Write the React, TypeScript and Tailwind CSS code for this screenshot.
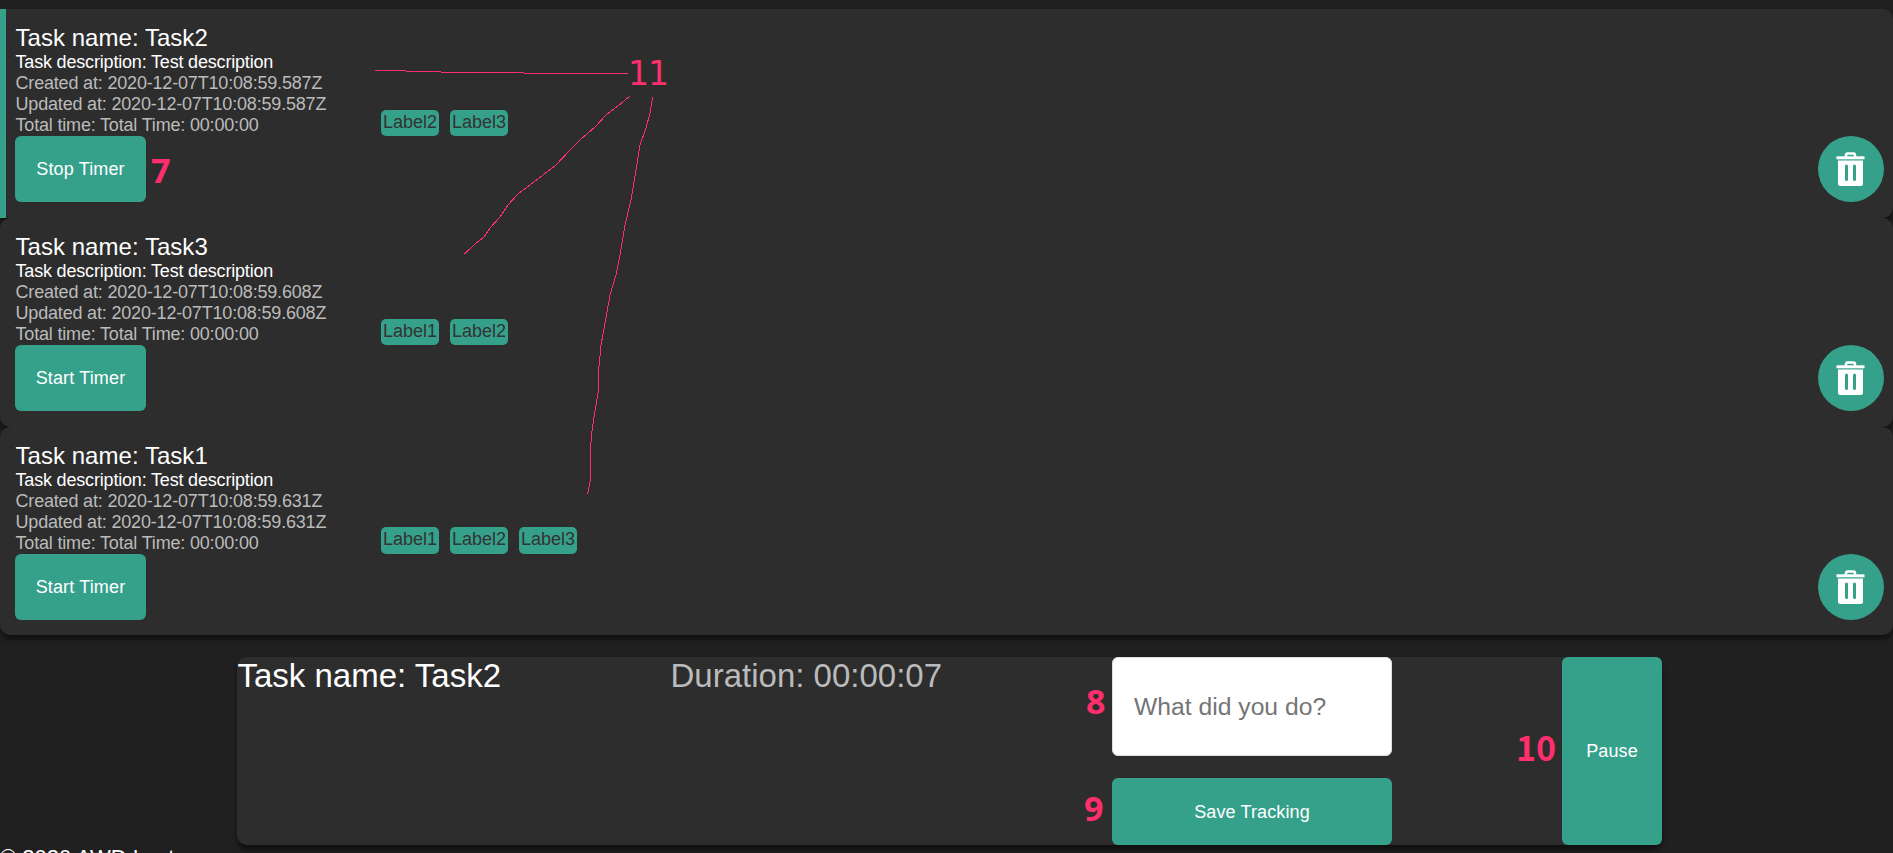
import React from 'react';

type Task = { name: string; stamp: string; labels: string[]; running?: boolean };

const tasks: Task[] = [
  { name: 'Task2', stamp: '2020-12-07T10:08:59.587Z', labels: ['Label2', 'Label3'], running: true },
  { name: 'Task3', stamp: '2020-12-07T10:08:59.608Z', labels: ['Label1', 'Label2'] },
  { name: 'Task1', stamp: '2020-12-07T10:08:59.631Z', labels: ['Label1', 'Label2', 'Label3'] },
];

function Trash() {
  return (
    <svg width="29" height="34" viewBox="0 0 29 34" fill="none" className="-translate-x-px">
      <path d="M10 5V3.200Q10 1.500 11.700 1.500H17.300Q19 1.500 19 3.200V5" stroke="#fff" strokeWidth="2.600" />
      <rect x="0.5" y="4.300" width="28" height="3" fill="#fff" />
      <path
        fillRule="evenodd"
        fill="#fff"
        d="M2 8.600H27V31.500Q27 34 24.500 34H4.500Q2 34 2 31.500ZM9 14V27.500a1.500 1.500 0 0 0 3 0V14a1.500 1.500 0 0 0 -3 0ZM17 14V27.500a1.500 1.500 0 0 0 3 0V14a1.500 1.500 0 0 0 -3 0Z"
      />
    </svg>
  );
}

function TaskCard({ task }: { task: Task }) {
  return (
    <li
      className={`group flex h-[209px] flex-col rounded-[10px] bg-[#2d2d2d] pr-[9px] pt-[15px] shadow-[0_5px_5px_rgba(0,0,0,0.45)] last:h-[208px] ${
        task.running ? 'rounded-l-none border-l-6 border-[#36a18b] pl-[9px]' : 'pl-[15px]'
      }`}
    >
      <div className="flex h-[112px] items-end">
        <div className="w-[366px] pl-[0.5px] leading-[21px] tracking-[-0.18px] text-[#bbb]">
          <h2 className="text-[24px] leading-[28px] tracking-[0.04px] text-white">Task name: {task.name}</h2>
          <p className="text-white">Task description: Test description</p>
          <p>Created at: {task.stamp}</p>
          <p>Updated at: {task.stamp}</p>
          <p>Total time: Total Time: 00:00:00</p>
        </div>
        <ul className="flex gap-[11px]">
          {task.labels.map((l) => (
            <li
              key={l}
              className="h-[26px] w-[58px] rounded-[5px] bg-[#36a18b] text-center leading-[24px] text-[#333] group-last:h-[27px]"
            >
              {l}
            </li>
          ))}
        </ul>
      </div>
      <div className="flex justify-between">
        <button className="h-[66px] w-[131px] rounded-[6px] bg-[#36a18b] tracking-[0.15px] text-white">
          {task.running ? 'Stop Timer' : 'Start Timer'}
        </button>
        <button className="flex size-[66px] items-center justify-center rounded-full bg-[#36a18b]">
          <Trash />
        </button>
      </div>
    </li>
  );
}

function Annotations() {
  return (
    <div className="pointer-events-none absolute inset-0 font-['Noto_Sans',sans-serif] text-[34px] leading-[40px] text-[#ff2e6c]">
      <svg className="absolute inset-0" width="1893" height="853" fill="none" stroke="#ff2e6c" shapeRendering="crispEdges">
        <path d="M375 70.500H406M406 71.500H441M441 72.500H524M524 73.500H628" />
        <path d="M630.500 95.500L618 106L606 115L596 126L587 134L580 140L570 150L556 165L543 175L530 185L518 194L508 205L500 217L490 228L484 237L475 244L464.500 254" />
        <path d="M652.500 97.500L650 113L646 128L640 145L636 170L631 200L625 225L620 255L616 275L610 295L606 318L601 345L598.500 372V390L596 405L593.500 420L591.500 435L590.500 450V480L587.500 494" />
      </svg>
      <span className="absolute left-[628px] top-[54px] font-['DejaVu_Sans',sans-serif] text-[33px] tracking-[-1px]">11</span>
      <b className="absolute left-[151px] top-[150px]">7</b>
      <b className="absolute left-[1086px] top-[681px]">8</b>
      <b className="absolute left-[1084px] top-[788px]">9</b>
      <b className="absolute left-[1516px] top-[727px] font-['Noto_Sans_CJK_SC',sans-serif]">10</b>
    </div>
  );
}

export default function App() {
  return (
    <div className="relative h-[853px] overflow-hidden bg-[#202020] pt-[9px] font-['Liberation_Sans',Arial,sans-serif] text-[18px]">
      <ul>
        {tasks.map((t) => (
          <TaskCard key={t.name} task={t} />
        ))}
      </ul>
      <section className="ml-[237px] mt-[22px] flex h-[188px] w-[1425px] rounded-[10px] bg-[#2d2d2d] text-[33px] leading-[37px] shadow-[0_5px_5px_rgba(0,0,0,0.5)]">
        <h2 className="w-[433px] pl-[0.5px] text-white">Task name: Task2</h2>
        <p className="w-[442px] pl-[0.5px] text-[#bbb]">Duration: 00:00:07</p>
        <div className="flex w-[280px] flex-col justify-between text-[18px]">
          <input
            className="h-[99px] rounded-[6px] border border-[#ddd] bg-white px-[21px] text-[24.7px] placeholder:text-[#757575]"
            placeholder="What did you do?"
          />
          <button className="h-[67px] rounded-[6px] bg-[#36a18b] pt-px tracking-[0.13px] text-white">Save Tracking</button>
        </div>
        <button className="ml-auto w-[100px] rounded-[6px] bg-[#36a18b] text-[18px] tracking-[0.1px] text-white">Pause</button>
      </section>
      <footer className="text-[22px] leading-[26px] text-white">© 2020 AWD Lect</footer>
      <Annotations />
    </div>
  );
}
